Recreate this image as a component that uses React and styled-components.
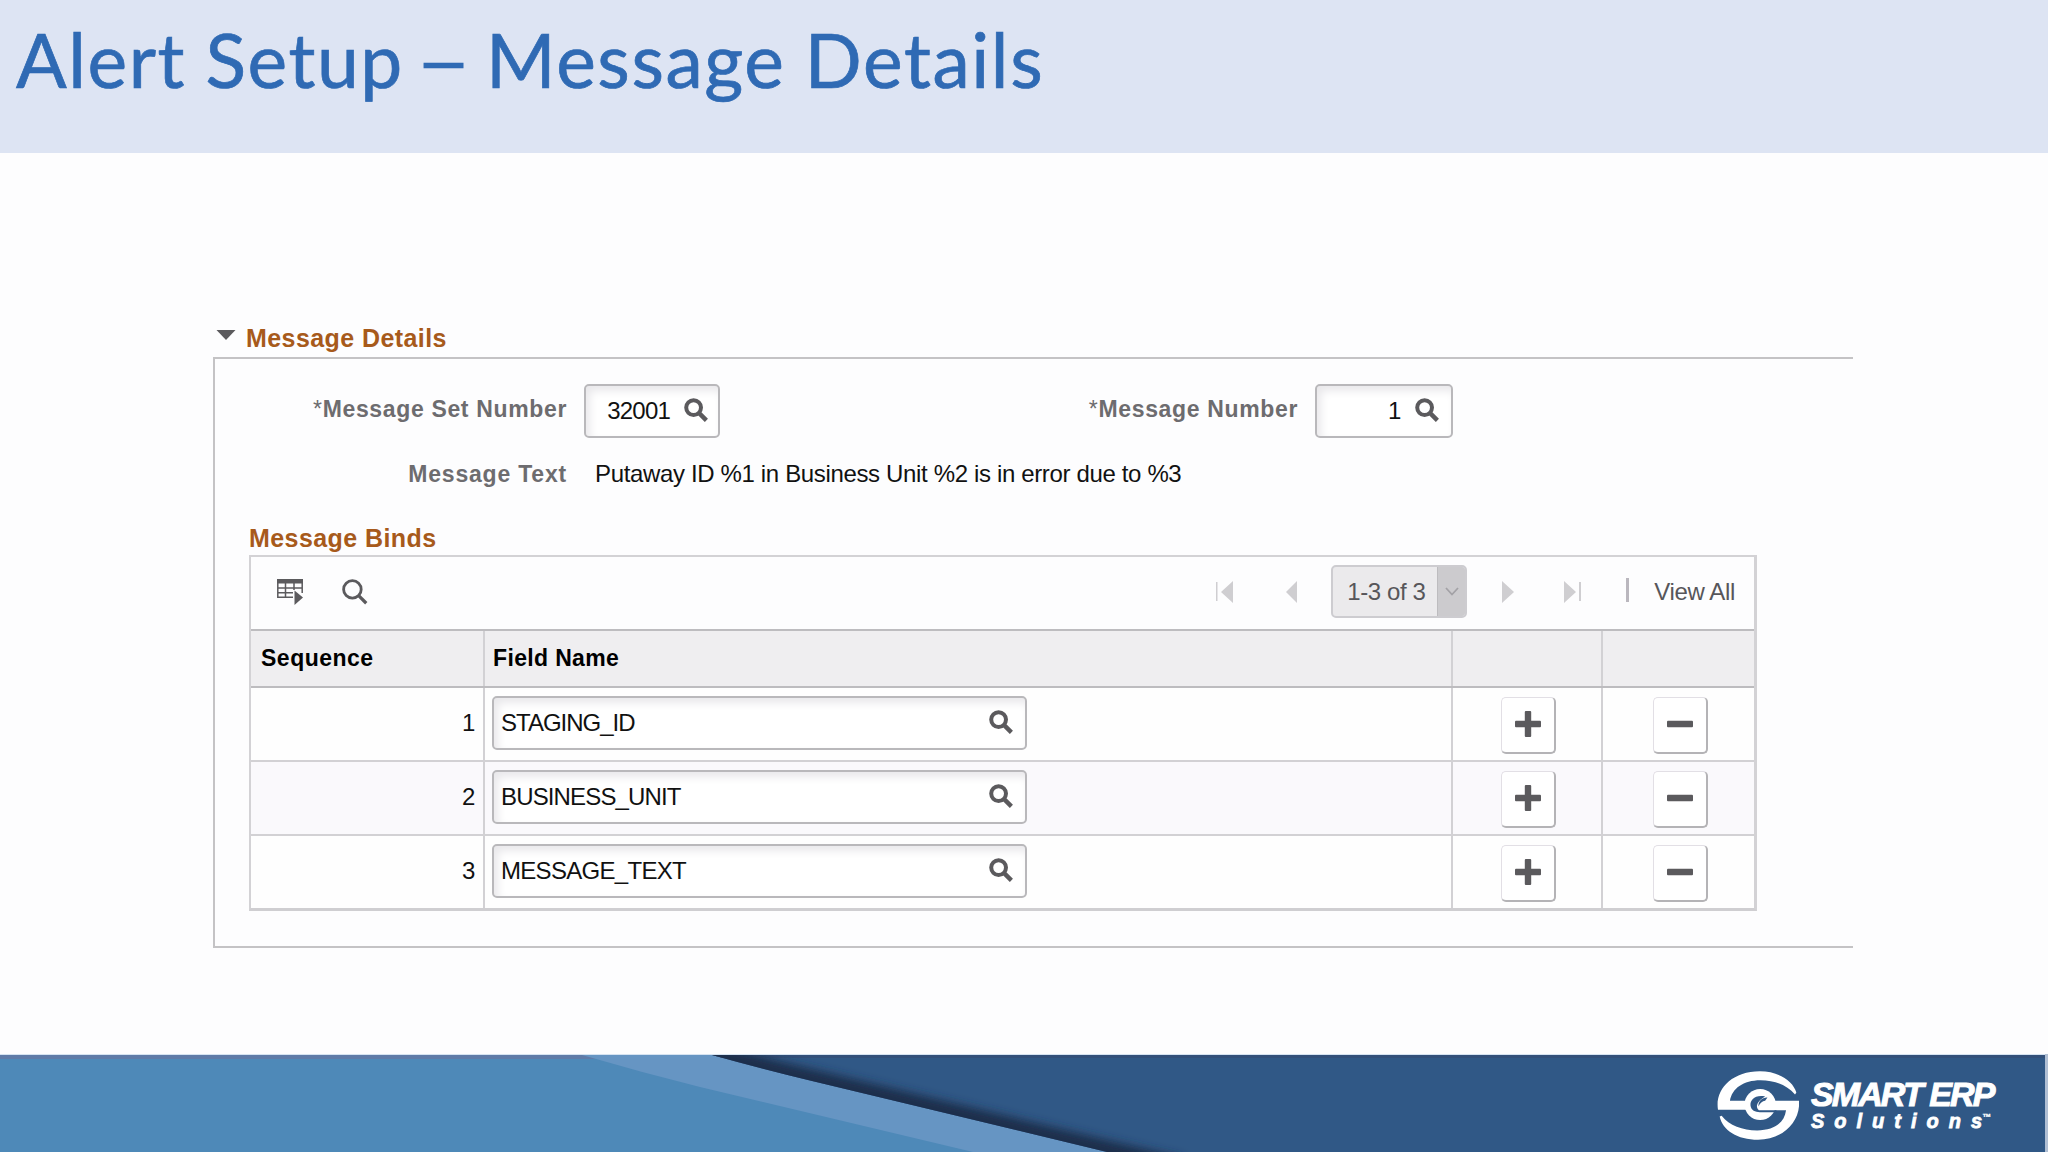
import React from 'react';
import styled, { createGlobalStyle } from 'styled-components';

const GlobalStyle = createGlobalStyle`
  * {
    box-sizing: border-box;
  }
  body {
    margin: 0;
    background: #fdfdfe;
    font-family: "Liberation Sans", Arial, sans-serif;
    color: #111;
  }
`;

const Slide = styled.div`
  width: 2048px;
  height: 1152px;
  display: flex;
  flex-direction: column;
  overflow: hidden;
`;

const TitleBar = styled.header`
  height: 153px;
  padding: 14px 0 0 16px;
  background: #dde4f3;
`;

const Title = styled.h1`
  display: flex;
  gap: 18.5px;
  margin: 0;
  font-family: Lato, sans-serif;
  font-size: 75px;
  font-weight: 400;
  line-height: 90px;
  letter-spacing: 1.6px;
  word-spacing: -1.5px;
  color: #2f6ab4;
  -webkit-text-stroke: 0.7px #2f6ab4;
  white-space: nowrap;
`;

const Dash = styled.span`
  transform: scaleX(1.3);
`;

const Content = styled.main`
  flex: 1;
  padding: 168px 195px 0 213px;
`;

const GroupHeader = styled.div`
  display: flex;
  align-items: center;
  height: 36px;
  padding: 0 0 2px 3px;
  gap: 10px;
`;

const Heading = styled.h2`
  margin: 0;
  font-size: 25px;
  line-height: 34px;
  font-weight: 700;
  letter-spacing: 0.42px;
  color: #a75a1b;
  white-space: nowrap;
`;

const GroupBox = styled.section`
  height: 591px;
  border: 2px solid #c4c3c5;
  border-right: 0;
  padding: 25px 0 0 34px;
`;

const FieldRow = styled.div`
  display: flex;
  align-items: flex-start;
  height: ${(props) => props.$height};
`;

const Label = styled.label`
  width: ${(props) => props.$width};
  margin-right: ${(props) => props.$gap || '17px'};
  text-align: right;
  font-size: 23px;
  line-height: 26px;
  padding-top: ${(props) => props.$top || '0'};
  font-weight: 700;
  letter-spacing: ${(props) => props.$spacing || '0.65px'};
  color: #6d6c6f;
  white-space: nowrap;

  span {
    font-weight: 400;
  }
`;

const Value = styled.span`
  font-size: 24px;
  line-height: 26px;
  letter-spacing: ${(props) => props.$spacing || '-0.35px'};
  white-space: nowrap;
`;

const Field = styled.div`
  display: flex;
  align-items: center;
  justify-content: ${(props) => (props.$numeric ? 'flex-end' : 'space-between')};
  gap: 14px;
  width: ${(props) => props.$width};
  height: 54px;
  padding: ${(props) => props.$pad || '0 12px 0 7px'};
  border: 2px solid #b9b8bb;
  border-radius: 5px;
  background: #fff;
  box-shadow: inset 4px 5px 8px #e9e8eb;

  svg {
    margin-top: -3px;
  }
`;

const Grid = styled.div`
  width: 1508px;
  border: 2px solid #d3d2d5;
  border-right-width: 3px;
  border-bottom: 3px solid #cfced1;
`;

const Toolbar = styled.div`
  display: flex;
  align-items: center;
  justify-content: space-between;
  height: 72px;
  padding: 0 19px 3px 26px;
`;

const Tools = styled.div`
  display: flex;
  align-items: center;
  gap: 39px;
`;

const Pager = styled.div`
  display: flex;
  align-items: center;
  color: #57565a;
`;

const Arrow = styled.svg`
  display: block;
  margin-right: ${(props) => props.$gap};
  fill: #cfced1;
`;

const RangePicker = styled.div`
  display: flex;
  width: 136px;
  height: 53px;
  margin-right: 35px;
  border: 2px solid #cdccd0;
  border-radius: 5px;
  background: #ebeaec;
  overflow: hidden;
`;

const RangeText = styled.div`
  flex: 1;
  padding-left: 14px;
  font-size: 24px;
  line-height: 49px;
  letter-spacing: -0.4px;
  white-space: nowrap;
`;

const RangeDrop = styled.div`
  display: flex;
  align-items: center;
  justify-content: center;
  width: 28px;
  background: #cccbce;
  border-left: 1px solid #bdbcbf;
`;

const Separator = styled.div`
  width: 3px;
  height: 24px;
  margin: -3px 25px 0 0;
  background: #bab7be;
`;

const Row = styled.div`
  display: grid;
  grid-template-columns: 234px 968px 150px 151px;
  height: ${(props) => (props.$head ? '57px' : '74px')};
  border-top: 2px solid ${(props) => (props.$dark ? '#bdbcbf' : '#d2d1d4')};
  background: ${(props) => props.$bg || 'transparent'};
`;

const Cell = styled.div`
  display: flex;
  align-items: flex-start;
  justify-content: ${(props) => props.$justify || 'flex-start'};
  padding: ${(props) => props.$pad || '8px 0 0 7px'};
  border-right: 2px solid #d2d1d4;

  &:last-child {
    border-right: 0;
  }
`;

const HeadText = styled.span`
  font-size: 23px;
  line-height: 26px;
  font-weight: 700;
  letter-spacing: ${(props) => props.$spacing || '0.35px'};
  color: #000;
`;

const IconButton = styled.button`
  display: flex;
  align-items: center;
  justify-content: center;
  width: 55px;
  height: 57px;
  padding: 0 0 3px;
  border: 1px solid #e2dfe5;
  border-right: 2px solid #b4b3b6;
  border-bottom: 2px solid #b4b3b6;
  border-radius: 5px;
  background: #fff;
`;

const Footer = styled.footer`
  position: relative;
  height: 98px;
`;

const Backdrop = styled.svg`
  position: absolute;
  inset: 0;
`;

const Brand = styled.div`
  position: absolute;
  left: 1717px;
  top: 17px;
  display: flex;
  gap: 12px;
  color: #fff;
`;

const BrandText = styled.div`
  padding-top: 6px;
  font-weight: 700;
  font-style: italic;
  white-space: nowrap;
`;

const BrandName = styled.div`
  font-size: 34px;
  line-height: 34px;
  letter-spacing: -1.9px;
  -webkit-text-stroke: 1px #fff;
`;

const BrandSub = styled.div`
  display: flex;
  margin-top: -1px;
  font-size: 20px;
  line-height: 22px;
  letter-spacing: 10px;
  -webkit-text-stroke: 0.8px #fff;

  span {
    letter-spacing: 0;
  }

  small {
    font-size: 9px;
    line-height: 14px;
    letter-spacing: 0;
    -webkit-text-stroke: 0.3px #fff;
  }
`;

const binds = [
  { seq: 1, field: 'STAGING_ID', spacing: '-1px' },
  { seq: 2, field: 'BUSINESS_UNIT', spacing: '-0.85px' },
  { seq: 3, field: 'MESSAGE_TEXT', spacing: '-0.7px' },
];

const SearchIcon = ({ size = 24, weight = 4 }) => (
  <svg width={size} height={size} viewBox="0 0 24 24" fill="none" stroke="#5b5a5d">
    <circle cx="9.6" cy="9.6" r={9.4 - weight / 2} strokeWidth={weight} />
    <path d="M15.6 15.6L22.4 22.4" strokeWidth={weight + 0.4} />
  </svg>
);

const GridIcon = () => (
  <svg width="26" height="26" viewBox="0 0 26 26">
    <path d="M0 0H26V4.500H0Z" fill="#5b5a5d" />
    <path
      d="M0.800 4V18.200H16M1 9H25M1 13.700H16M8.500 4V18M17 4V11M25.200 4V14"
      fill="none"
      stroke="#5b5a5d"
      strokeWidth="1.5"
    />
    <path d="M17.500 11.500L26 18.500L17.500 26Z" fill="#5b5a5d" />
  </svg>
);

const PlusIcon = () => (
  <svg width="26" height="26" viewBox="0 0 26 26" fill="#5b5a5d">
    <rect x="0" y="9.8" width="26" height="6.4" rx="1" />
    <rect x="9.8" y="0" width="6.4" height="26" rx="1" />
  </svg>
);

const MinusIcon = () => (
  <svg width="26" height="26" viewBox="0 0 26 26" fill="#5b5a5d">
    <rect x="0" y="9.8" width="26" height="6.4" rx="1" />
  </svg>
);

const LogoMark = () => (
  <svg width="82" height="69" viewBox="51 34 247 206" fill="#fff">
    <path d="M54 150C44 90 95 34 180 34C235 34 280 62 290 98L286 104C262 76 225 61 182 61C130 61 96 86 90 123H140V150Z" />
    <path d="M298 123C303 185 250 240 175 240C112 240 68 212 59 170L65 168C88 198 128 212 172 212C222 212 254 190 259 151H200V123Z" />
    <circle cx="181" cy="134" r="47" />
    {/* swirl cut out of the centre ring */}
    <path
      d="M196 110C166 104 150 120 152 138C154 152 166 157 180 157H230V151H177C165 140 172 124 196 110Z"
      fill="#305886"
    />
    <path d="M176 140C174 124 188 112 203 113L196 123C188 124 180 130 176 140Z" fill="#305886" />
  </svg>
);

const FooterBackdrop = () => (
  <Backdrop width="2048" height="98" viewBox="0 0 2048 98">
    <defs>
      <clipPath id="navy">
        <path d="M712 1Q762 15 812 27L1107 98H2048V1Z" />
      </clipPath>
      <filter id="soft" x="-10%" y="-50%" width="120%" height="200%">
        <feGaussianBlur stdDeviation="5" />
      </filter>
    </defs>
    <rect width="2048" height="2" fill="#d5e3f1" />
    <rect y="1" width="2048" height="97" fill="#4e89b8" />
    <rect y="1" width="2048" height="4" fill="#5f7ba8" />
    <path d="M582 1Q640 18 700 33L973 98H1112L812 26L714 1Z" fill="#6695c3" />
    <g clipPath="url(#navy)">
      <rect x="700" width="1348" height="98" fill="#305886" />
      <rect x="700" width="1348" height="4" fill="#33507a" />
      <path
        d="M650 -14L712 1Q762 15 812 27L1107 98L1180 115"
        fill="none"
        stroke="#1b2f4c"
        strokeWidth="23"
        filter="url(#soft)"
      />
    </g>
    <rect x="2045" width="3" height="98" fill="#b0bfd4" />
  </Backdrop>
);

const BindRow = ({ bind, index }) => (
  <Row $dark={index === 0} $bg={index % 2 ? '#faf9fc' : '#fefefe'}>
    <Cell $justify="flex-end" $pad="22px 8px 0 0">
      <Value>{bind.seq}</Value>
    </Cell>
    <Cell>
      <Field $width="535px">
        <Value $spacing={bind.spacing}>{bind.field}</Value>
        <SearchIcon />
      </Field>
    </Cell>
    <Cell $pad="9px 0 0 48px">
      <IconButton>
        <PlusIcon />
      </IconButton>
    </Cell>
    <Cell $pad="9px 0 0 50px">
      <IconButton>
        <MinusIcon />
      </IconButton>
    </Cell>
  </Row>
);

const App = () => {
  return (
    <>
      <GlobalStyle />
      <Slide>
        <TitleBar>
          <Title>
            <span>Alert Setup</span>
            <Dash>–</Dash>
            <span>Message Details</span>
          </Title>
        </TitleBar>
        <Content>
          <GroupHeader>
            <svg width="20" height="16" viewBox="0 0 20 16">
              <path d="M0.500 0H19.500L10 10Z" fill="#5b5a5d" />
            </svg>
            <Heading>Message Details</Heading>
          </GroupHeader>
          <GroupBox>
            <FieldRow $height="77px">
              <Label $width="318px" $top="12px">
                <span>*</span>Message Set Number
              </Label>
              <Field $numeric $width="136px" $pad="0 10px 0 0">
                <Value $spacing="-0.8px">32001</Value>
                <SearchIcon />
              </Field>
              <Label $width="578px" $top="12px">
                <span>*</span>Message Number
              </Label>
              <Field $numeric $width="138px" $pad="0 12px 0 0">
                <Value>1</Value>
                <SearchIcon />
              </Field>
            </FieldRow>
            <FieldRow $height="60px">
              <Label $width="318px" $gap="28px" $top="-1px" $spacing="0.8px">
                Message Text
              </Label>
              <Value>Putaway ID %1 in Business Unit %2 is in error due to %3</Value>
            </FieldRow>
            <FieldRow $height="34px">
              <Heading>Message Binds</Heading>
            </FieldRow>
            <Grid>
              <Toolbar>
                <Tools>
                  <GridIcon />
                  <SearchIcon size={26} weight={2.6} />
                </Tools>
                <Pager>
                  <Arrow width="17" height="22" $gap="53px">
                    <path d="M0 1H1.500V20H0ZM17 0V22L5 11Z" />
                  </Arrow>
                  <Arrow width="11" height="22" $gap="34px">
                    <path d="M11 0V22L0 11Z" />
                  </Arrow>
                  <RangePicker>
                    <RangeText>1-3 of 3</RangeText>
                    <RangeDrop>
                      <svg width="14" height="9" viewBox="0 0 14 9" fill="none" stroke="#a3a2a6" strokeWidth="1.8">
                        <path d="M1 1L7 7.500L13 1" />
                      </svg>
                    </RangeDrop>
                  </RangePicker>
                  <Arrow width="12" height="22" $gap="50px">
                    <path d="M0 0V22L12 11Z" />
                  </Arrow>
                  <Arrow width="17" height="22" $gap="45px">
                    <path d="M0 0V22L12 11ZM15 1H17V20H15Z" />
                  </Arrow>
                  <Separator />
                  <Value>View All</Value>
                </Pager>
              </Toolbar>
              <Row $head $dark $bg="#efeef0">
                <Cell $pad="14px 0 0 10px">
                  <HeadText $spacing="0.5px">Sequence</HeadText>
                </Cell>
                <Cell $pad="14px 0 0 8px">
                  <HeadText>Field Name</HeadText>
                </Cell>
                <Cell />
                <Cell />
              </Row>
              {binds.map((bind, index) => (
                <BindRow key={bind.seq} bind={bind} index={index} />
              ))}
            </Grid>
          </GroupBox>
        </Content>
        <Footer>
          <FooterBackdrop />
          <Brand>
            <LogoMark />
            <BrandText>
              <BrandName>SMART ERP</BrandName>
              <BrandSub>
                Solution<span>s</span>
                <small>™</small>
              </BrandSub>
            </BrandText>
          </Brand>
        </Footer>
      </Slide>
    </>
  );
};

export default App;
